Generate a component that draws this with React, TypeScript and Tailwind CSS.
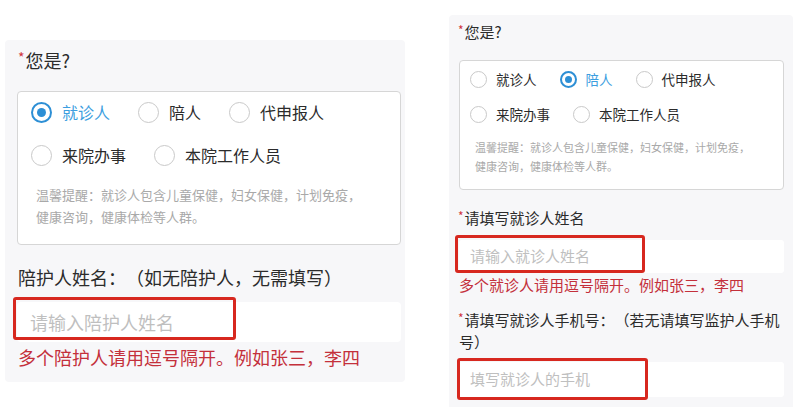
import clsx from "clsx";

function Star({ big }: { big?: boolean }) {
  return (
    <span
      className={clsx(
        "mr-[1px] leading-none text-[#d0343c]",
        big ? "text-[14px] align-[5px]" : "text-[12px] align-[3px]"
      )}
    >
      *
    </span>
  );
}

function Radio({
  label,
  checked,
  big,
}: {
  label: string;
  checked?: boolean;
  big?: boolean;
}) {
  return (
    <div className={clsx("flex items-center", big ? "gap-[10px]" : "gap-[9px]")}>
      <span
        className={clsx(
          "flex shrink-0 items-center justify-center rounded-full bg-white",
          big ? "h-[21px] w-[21px]" : "h-[17px] w-[17px]",
          checked
            ? "border-2 border-[#2d8fd5]"
            : "border-[1.5px] border-[#c9c9c9]"
        )}
      >
        {checked && (
          <span
            className={clsx(
              "rounded-full bg-[#2d8fd5]",
              big ? "h-[9px] w-[9px]" : "h-[7px] w-[7px]"
            )}
          />
        )}
      </span>
      <span className={checked ? "text-[#3c9ee0]" : "text-[#2b2b2b]"}>{label}</span>
    </div>
  );
}

function LeftPanel() {
  return (
    <div className="ml-[5px] mt-[40px] w-[400px] shrink-0 rounded-[4px] bg-[#f7f7f9] pb-[13px] pl-[12px] pr-[4px] pt-[8px]">
      <div className="pl-[1px] text-[18px] leading-[24px] text-[#2b2b2b]">
        <Star big />
        您是?
      </div>

      <div className="mt-[19px] rounded-[4px] border border-[#d6d6d6] bg-white pb-[16px] pl-[13px] pr-[10px] pt-[9px]">
        <div className="flex h-[22px] items-center gap-[28px] text-[16px]">
          <Radio big checked label="就诊人" />
          <Radio big label="陪人" />
          <Radio big label="代申报人" />
        </div>
        <div className="mt-[21px] flex h-[22px] items-center gap-[28px] text-[16px]">
          <Radio big label="来院办事" />
          <Radio big label="本院工作人员" />
        </div>
        <p className="ml-[5px] mt-[18px] text-[13px] leading-[22px] text-[#a9a9a9]">
          温馨提醒：就诊人包含儿童保健，妇女保健，计划免疫，
          <br />
          健康咨询，健康体检等人群。
        </p>
      </div>

      <div className="mt-[20px] pl-[1px] text-[18px] leading-[24px] text-[#2b2b2b]">
        陪护人姓名：（如无陪护人，无需填写）
      </div>

      <div className="relative mt-[13px] flex h-[40px] items-center rounded-[4px] bg-white pl-[13px]">
        <input
          readOnly
          placeholder="请输入陪护人姓名"
          className="w-full bg-transparent text-[18px] outline-none placeholder:text-[#bfbfbf]"
        />
        <div className="pointer-events-none absolute left-[-4px] top-[-5px] h-[43px] w-[223px] rounded-[3px] border-[3px] border-[#d7281f]" />
      </div>

      <div className="mt-[3px] pl-[1px] text-[18px] leading-[24px] text-[#c4303b]">
        多个陪护人请用逗号隔开。例如张三，李四
      </div>
    </div>
  );
}

function RightPanel() {
  return (
    <div className="ml-[44px] mt-[15px] w-[344px] shrink-0 rounded-[4px] bg-[#f7f7f9] pb-[20px] pl-[9px] pr-[9px] pt-[7px]">
      <div className="text-[15px] leading-[20px] text-[#2b2b2b]">
        <Star />
        您是?
      </div>

      <div className="ml-[1px] mt-[18px] rounded-[4px] border border-[#d6d6d6] bg-white pb-[13px] pl-[10px] pr-[8px] pt-[8px]">
        <div className="flex h-[20px] items-center gap-[23px] text-[13.5px]">
          <Radio label="就诊人" />
          <Radio checked label="陪人" />
          <Radio label="代申报人" />
        </div>
        <div className="mt-[15px] flex h-[20px] items-center gap-[23px] text-[13.5px]">
          <Radio label="来院办事" />
          <Radio label="本院工作人员" />
        </div>
        <p className="ml-[5px] mt-[14px] text-[11px] leading-[19px] text-[#a9a9a9]">
          温馨提醒：就诊人包含儿童保健，妇女保健，计划免疫，
          <br />
          健康咨询，健康体检等人群。
        </p>
      </div>

      <div className="mt-[17px] text-[15px] leading-[22px] text-[#2b2b2b]">
        <Star />
        请填写就诊人姓名
      </div>
      <div className="relative ml-[1px] mt-[11px] flex h-[33px] items-center rounded-[3px] bg-white pl-[11px]">
        <input
          readOnly
          placeholder="请输入就诊人姓名"
          className="w-full bg-transparent text-[15px] outline-none placeholder:text-[#bfbfbf]"
        />
        <div className="pointer-events-none absolute left-[-4px] top-[-5px] h-[38px] w-[190px] rounded-[3px] border-[3px] border-[#d7281f]" />
      </div>
      <div className="ml-[1px] mt-[1px] text-[15px] leading-[22px] text-[#c4303b]">
        多个就诊人请用逗号隔开。例如张三，李四
      </div>

      <div className="mt-[13px] text-[15px] leading-[22px] text-[#2b2b2b]">
        <Star />
        请填写就诊人手机号：（若无请填写监护人手机
        <br />
        <span className="ml-[1px]">号）</span>
      </div>
      <div className="relative ml-[1px] mt-[9px] flex h-[35px] items-center rounded-[3px] bg-white pl-[11px]">
        <input
          readOnly
          placeholder="填写就诊人的手机"
          className="w-full bg-transparent text-[15px] outline-none placeholder:text-[#bfbfbf]"
        />
        <div className="pointer-events-none absolute left-[-2px] top-[-4px] h-[42px] w-[191px] rounded-[3px] border-[3px] border-[#d7281f]" />
      </div>
    </div>
  );
}

export default function App() {
  return (
    <div className="flex h-[407px] w-[802px] items-start overflow-hidden bg-white font-['Noto_Sans_CJK_SC',sans-serif] [text-spacing-trim:space-all]">
      <LeftPanel />
      <RightPanel />
    </div>
  );
}
